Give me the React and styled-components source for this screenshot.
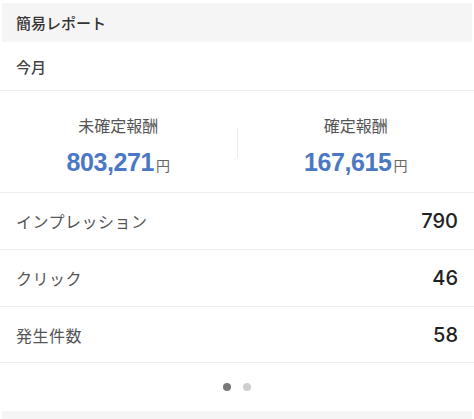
import React from "react";
import styled, { createGlobalStyle } from "styled-components";

const Global = createGlobalStyle`
  html, body { margin: 0; padding: 0; background: #fff; }
  body { font-family: "Liberation Sans", "Noto Sans CJK JP", sans-serif; }
`;

const Page = styled.div`
  width: 474px;
  height: 419px;
  padding-top: 3px;
  box-sizing: border-box;
  display: flex;
  flex-direction: column;
  overflow: hidden;
`;

const Header = styled.div`
  margin: 0 2px;
  height: 39px;
  background: #f5f5f5;
  display: flex;
  align-items: center;
  padding-left: 14px;
  font-family: "Noto Sans CJK JP", sans-serif;
  font-size: 15px;
  font-weight: 500;
  color: #333;
`;

const Period = styled.div`
  height: 49px;
  border-bottom: 1px solid #efefef;
  display: flex;
  align-items: center;
  padding-left: 16px;
  font-family: "Noto Sans CJK JP", sans-serif;
  font-size: 15px;
  font-weight: 500;
  color: #444;
  box-sizing: border-box;
`;

const Stats = styled.div`
  height: 102px;
  border-bottom: 1px solid #efefef;
  box-sizing: border-box;
  display: grid;
  grid-template-columns: 1fr 1px 1fr;
  align-items: center;
`;

const Stat = styled.div`
  display: flex;
  flex-direction: column;
  align-items: center;
  gap: 13px;
  padding-top: 10px;
`;

const StatLabel = styled.div`
  font-family: "Noto Sans CJK JP", sans-serif;
  font-size: 16px;
  color: #555;
  line-height: 20px;
`;

const Amount = styled.div`
  display: flex;
  align-items: baseline;
  color: #4a78c4;
  font-family: "Liberation Sans", sans-serif;
  font-weight: 700;
  font-size: 25px;
  line-height: 28px;
  letter-spacing: -0.4px;
`;

const Yen = styled.span`
  font-family: "Noto Sans CJK JP", sans-serif;
  font-weight: 400;
  font-size: 14px;
  color: #666;
  margin-left: 2px;
  letter-spacing: 0;
`;

const VDivider = styled.div`
  width: 1px;
  height: 30px;
  background: #ececec;
  margin-top: 2px;
`;

const Row = styled.div`
  height: ${(p) => p.$h}px;
  border-bottom: 1px solid #efefef;
  box-sizing: border-box;
  display: flex;
  align-items: center;
  justify-content: space-between;
  padding: 0 16px 0 16px;
`;

const RowLabel = styled.div`
  font-family: "Noto Sans CJK JP", sans-serif;
  font-size: 16px;
  color: #555;
  letter-spacing: 0.5px;
`;

const RowValue = styled.div`
  font-family: Inter, "Liberation Sans", sans-serif;
  font-size: 20px;
  font-weight: 500;
  color: #222;
`;

const Dots = styled.div`
  height: 48px;
  display: flex;
  align-items: center;
  justify-content: center;
  gap: 12px;
`;

const Dot = styled.span`
  width: 8px;
  height: 8px;
  border-radius: 50%;
  background: ${(p) => (p.$active ? "#7a7a7a" : "#cfcfcf")};
`;

const Footer = styled.div`
  margin: 0 2px;
  flex: 1;
  background: #f5f5f5;
`;

const rows = [
  { label: "インプレッション", value: "790", h: 57 },
  { label: "クリック", value: "46", h: 57 },
  { label: "発生件数", value: "58", h: 56 },
];

export default function App() {
  return (
    <>
      <Global />
      <Page>
        <Header>簡易レポート</Header>
        <Period>今月</Period>
        <Stats>
          <Stat>
            <StatLabel>未確定報酬</StatLabel>
            <Amount>
              803,271<Yen>円</Yen>
            </Amount>
          </Stat>
          <VDivider />
          <Stat>
            <StatLabel>確定報酬</StatLabel>
            <Amount>
              167,615<Yen>円</Yen>
            </Amount>
          </Stat>
        </Stats>
        {rows.map((r) => (
          <Row key={r.label} $h={r.h}>
            <RowLabel>{r.label}</RowLabel>
            <RowValue>{r.value}</RowValue>
          </Row>
        ))}
        <Dots>
          <Dot $active />
          <Dot />
        </Dots>
        <Footer />
      </Page>
    </>
  );
}
